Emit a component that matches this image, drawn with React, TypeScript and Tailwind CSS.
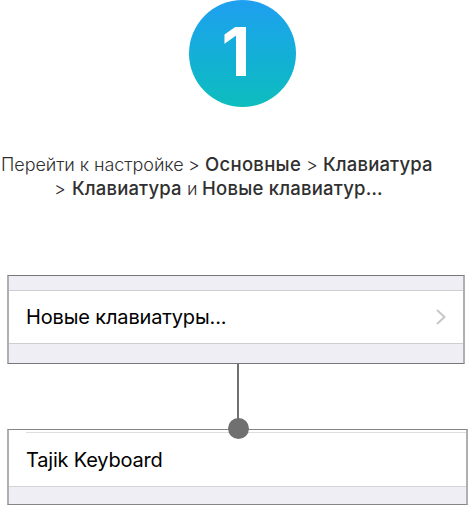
function Instructions() {
  return (
    <div className="mt-[46px] whitespace-nowrap font-['Inter','Noto_Sans',sans-serif] text-[18px] leading-6 text-[#303030]">
      <div className="flex pl-px font-light">
        <span className="w-[187px] tracking-[-0.06px]">Перейти к настройке</span>
        <span className="w-[17px]">&gt;</span>
        <span className="-mt-px w-[101px] text-[18.5px] font-medium tracking-[0.3px]">Основные</span>
        <span className="w-[17px]">&gt;</span>
        <span className="-mt-px text-[18.5px] font-medium tracking-[0.15px]">Клавиатура</span>
      </div>
      <div className="mt-px flex pl-[54px] font-light">
        <span className="-mt-px w-[18px]">&gt;</span>
        <span className="-mt-[2px] w-[115px] text-[18.5px] font-medium tracking-[0.15px]">Клавиатура</span>
        <span className="-mt-px w-[15px]">и</span>
        <span className="-mt-[2px] text-[18.5px] font-medium tracking-[0.22px]">Новые клавиатур…</span>
      </div>
    </div>
  );
}

export default function App() {
  return (
    <main className="h-[505px] w-[468px] overflow-hidden bg-white pt-px">
      <div className="-mt-px ml-[189px] flex size-[107px] items-center justify-center rounded-full bg-linear-to-b from-[#209ff0] to-[#0fbdbd] pr-[13px] pb-[4px] font-['Inter',sans-serif] text-[67px] font-bold leading-none text-white">
        <span>1</span>
      </div>
      <Instructions />
      <section className="mt-[74px] ml-[7px] h-[89px] w-[458px] border-x-2 border-y border-x-[#b0b0b0] border-y-[#777] bg-[#efeef4] pt-[14px]">
        <div className="flex h-[54px] items-center justify-between border-y border-[#ceced2] bg-white pr-[17px] pl-[17px]">
          <span className="font-['Inter','Noto_Sans',sans-serif] text-[20px] leading-6 tracking-[-0.15px] text-black">Новые клавиатуры...</span>
          <svg width="10" height="16" viewBox="0 0 10 16" fill="none" stroke="#c7c7cc" strokeWidth="2">
            <path d="M1 1l7.5 7L1 15" />
          </svg>
        </div>
      </section>
      <div className="ml-[237px] h-[65px] w-[2px] bg-[#707070]" />
      <section className="relative ml-[7px] h-[76px] w-[461px] border-x-2 border-y border-x-[#b0b0b0] border-y-[#858585] bg-white">
        <div className="absolute top-[-12px] left-[219px] size-[21px] rounded-full bg-[#707070]" />
        <div className="mt-[2px] ml-[17px] h-px bg-[#dedee0]" />
        <div className="flex h-[53px] items-center pl-[17px] font-['Inter',sans-serif] text-[20px] leading-6 tracking-[-0.2px] text-black">Tajik Keyboard</div>
        <div className="h-[18px] border-t border-[#d4d4d8] bg-[#efeef4]" />
      </section>
    </main>
  );
}
